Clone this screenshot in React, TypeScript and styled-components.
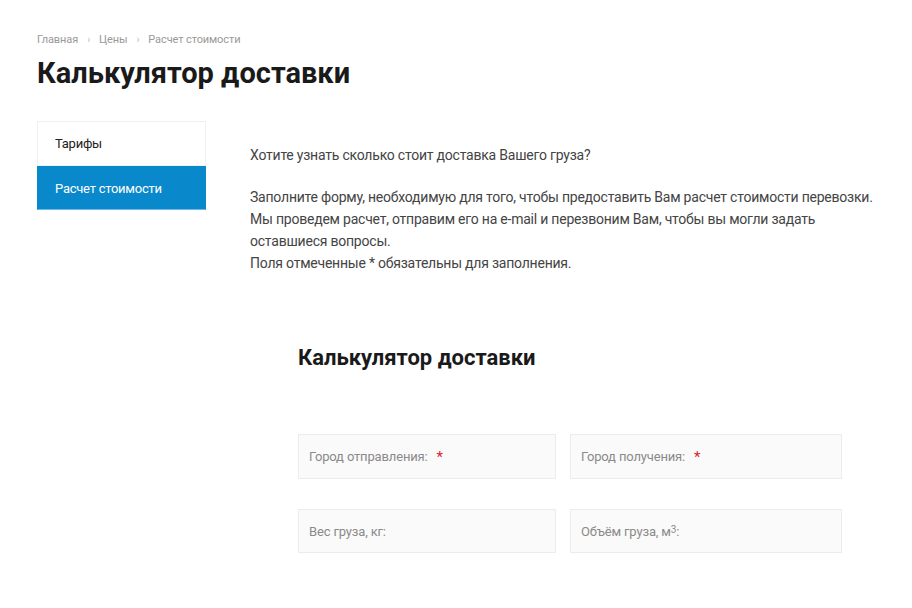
import styled, { createGlobalStyle } from "styled-components";

const GlobalStyle = createGlobalStyle`
    * { box-sizing: border-box; }
    body {
        margin: 0;
        background: #fff;
        font-family: Roboto, "Liberation Sans", sans-serif;
        color: #333;
    }
`;

const Page = styled.div`
    padding: 32px 28px 0 37px;
`;

const Crumbs = styled.nav`
    display: flex;
    align-items: center;
    font-size: 11px;
    color: #999;
    line-height: 16px;
    letter-spacing: -0.1px;
`;

const Sep = styled.span`
    margin: 0 9px 0 9px;
    color: #bbb;
    font-size: 10px;
`;

const Title = styled.h1`
    margin: 6px 0 0;
    font-size: 29px;
    line-height: 38px;
    font-weight: 700;
    color: #1a1a1a;
`;

const Body = styled.div`
    display: flex;
    margin-top: 29px;
`;

const Side = styled.ul`
    list-style: none;
    margin: 0;
    padding: 0;
    width: 169px;
    flex-shrink: 0;
`;

const SideItem = styled.li<{ $active?: boolean }>`
    height: ${(p) => (p.$active ? "44px" : "45px")};
    display: flex;
    align-items: center;
    padding-left: 17px;
    font-size: 13px;
    letter-spacing: -0.25px;
    color: ${(p) => (p.$active ? "#fff" : "#222")};
    background: ${(p) => (p.$active ? "#0a88cc" : "#fff")};
    border: 1px solid ${(p) => (p.$active ? "#0a88cc" : "#f0f0f0")};
    border-bottom: 1px solid ${(p) => (p.$active ? "#6bbce6" : "#f0f0f0")};
`;

const Content = styled.div`
    margin-left: 44px;
    flex: 1;
`;

const Intro = styled.div`
    padding-top: 23px;
    font-size: 14px;
    line-height: 22px;
    letter-spacing: -0.22px;
    color: #444;
    p { margin: 0; }
`;

const Gap = styled.div`
    height: 20px;
`;

const Form = styled.section`
    margin: 69px 0 0 48px;
`;

const FormTitle = styled.h2`
    margin: 0;
    font-size: 22px;
    line-height: 30px;
    font-weight: 700;
    color: #1a1a1a;
`;

const Grid = styled.div`
    display: grid;
    grid-template-columns: 258px 272px;
    column-gap: 14px;
    row-gap: 30px;
    margin-top: 61px;
`;

const Field = styled.div<{ $h: number }>`
    height: ${(p) => p.$h}px;
    display: flex;
    align-items: center;
    padding-left: 10px;
    background: #fafafa;
    border: 1px solid #ececec;
    font-size: 13px;
    letter-spacing: -0.15px;
    color: #8a8a8a;
    sup { font-size: 10px; line-height: 0; position: relative; top: -1px; }
`;

const Star = styled.span`
    color: #d9232e;
    margin-left: 9px;
    font-size: 15px;
`;

export default function App() {
    return (
        <Page>
            <GlobalStyle />
            <Crumbs>
                Главная<Sep>›</Sep>Цены<Sep>›</Sep>Расчет стоимости
            </Crumbs>
            <Title>Калькулятор доставки</Title>
            <Body>
                <Side>
                    <SideItem>Тарифы</SideItem>
                    <SideItem $active>Расчет стоимости</SideItem>
                </Side>
                <Content>
                    <Intro>
                        <p>Хотите узнать сколько стоит доставка Вашего груза?</p>
                        <Gap />
                        <p>Заполните форму, необходимую для того, чтобы предоставить Вам расчет стоимости перевозки.</p>
                        <p>Мы проведем расчет, отправим его на e-mail и перезвоним Вам, чтобы вы могли задать оставшиеся вопросы.</p>
                        <p>Поля отмеченные * обязательны для заполнения.</p>
                    </Intro>
                    <Form>
                        <FormTitle>Калькулятор доставки</FormTitle>
                        <Grid>
                            <Field $h={45}>Город отправления:<Star>*</Star></Field>
                            <Field $h={45}>Город получения:<Star>*</Star></Field>
                            <Field $h={44}>Вес груза, кг:</Field>
                            <Field $h={44}>Объём груза, м<sup>3</sup>:</Field>
                        </Grid>
                    </Form>
                </Content>
            </Body>
        </Page>
    );
}
